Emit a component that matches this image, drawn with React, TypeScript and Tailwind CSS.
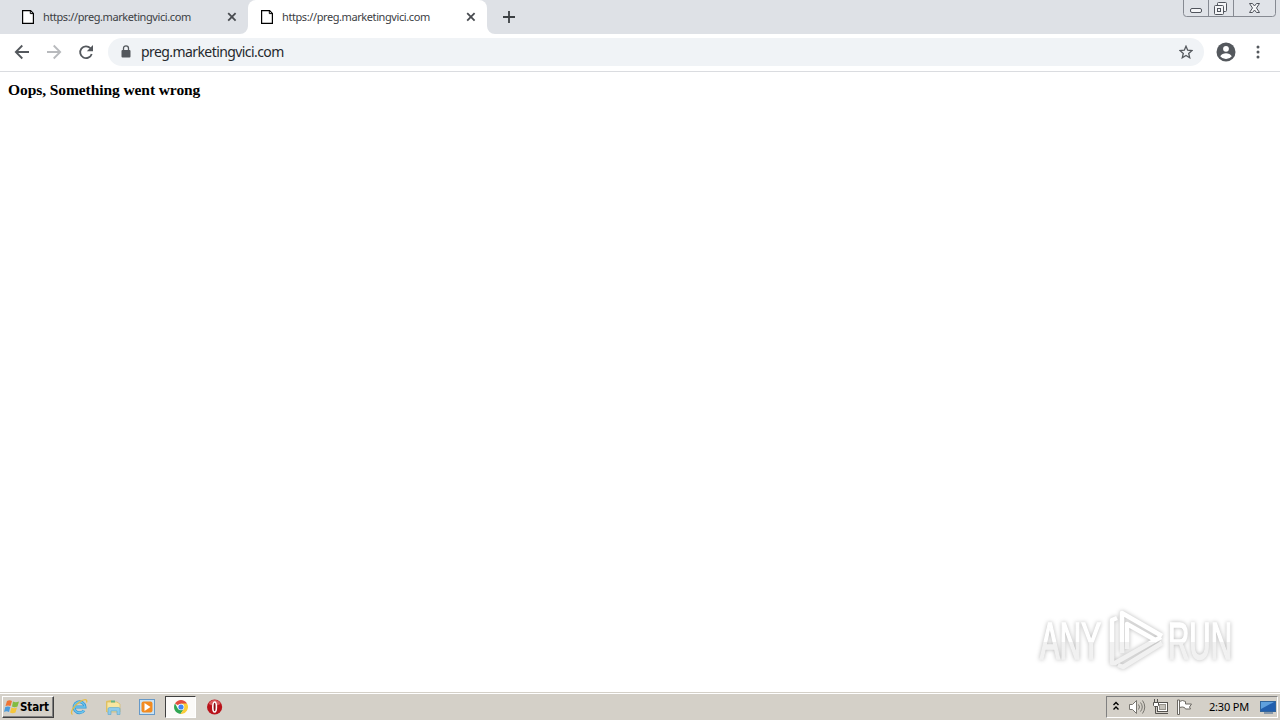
import React from 'react';

const PageIcon: React.FC = () => (
  <svg width="12" height="14" viewBox="0 0 12 14" className="shrink-0">
    <path d="M.6.6h8l2.800 2.800v10H.6z" fill="#fff" stroke="#000" strokeWidth="1.200" />
    <path d="M8.300.6v3h3" fill="none" stroke="#000" strokeWidth="1" />
  </svg>
);

const CloseIcon: React.FC = () => (
  <svg width="10" height="10" viewBox="0 0 10 10" className="shrink-0">
    <path d="M1.200 1.200l7.400 7.400M8.600 1.200L1.200 8.600" stroke="#484b50" strokeWidth="1.800" />
  </svg>
);

const TabTitle: React.FC = () => (
  <span className="ml-[9px] w-[180px] whitespace-nowrap text-[11px] leading-[14px] tracking-[-0.41px] text-[#3c4043]">
    https://preg.marketingvici.com
  </span>
);

const TabStrip: React.FC = () => (
  <div className="flex h-[34px] bg-[#dee1e6]">
    <div className="flex w-[248px] items-center pl-[22px]">
      <PageIcon />
      <TabTitle />
      <span className="ml-1"><CloseIcon /></span>
    </div>
    <div className="relative flex w-[239px] items-center rounded-t-lg bg-white pl-[13px]">
      <svg width="8" height="8" viewBox="0 0 8 8" className="absolute bottom-0 -left-2">
        <path d="M8 0v8H0a8 8 0 0 0 8-8z" fill="#fff" />
      </svg>
      <svg width="8" height="8" viewBox="0 0 8 8" className="absolute -right-2 bottom-0">
        <path d="M0 0v8h8a8 8 0 0 1-8-8z" fill="#fff" />
      </svg>
      <PageIcon />
      <TabTitle />
      <span className="ml-1"><CloseIcon /></span>
    </div>
    <div className="flex w-11 items-center justify-center">
      <svg width="12" height="12" viewBox="0 0 12 12">
        <path d="M6 0v12M0 6h12" stroke="#3c4043" strokeWidth="1.800" />
      </svg>
    </div>
    {/* Window controls */}
    <svg width="93" height="18" viewBox="0 0 93 18" className="mr-[4px] ml-auto">
      <path d="M.5 0v13.500q0 3 3 3h86q3 0 3-3V0M25.500 0v16.500M50.500 0v16.500" fill="#e0e3e8" stroke="#868a92" />
      <g fill="#f4f5f7" stroke="#50545c">
        <rect x="7.500" y="8.500" width="11" height="4" rx="1.500" />
        <rect x="34.500" y="2.500" width="9" height="9" rx="1" />
        <rect x="31.500" y="5.500" width="9" height="9" rx="1" />
        <rect x="34.500" y="8.500" width="3" height="3" />
        <path d="M66.500 3.500h3l2 2.500 2-2.500h3l-3 4.500 3 4.500h-3l-2-2.500-2 2.500h-3l3-4.500z" />
      </g>
    </svg>
  </div>
);

const Toolbar: React.FC = () => (
  <div className="flex h-[38px] items-center border-b border-[#dadce0] bg-white pb-px pl-[14px]">
    <svg width="80" height="16" viewBox="0 0 80 16" fill="none" strokeWidth="1.800" className="shrink-0">
      <path d="M15 8H2M8.300 1.500L1.800 8l6.500 6.500" stroke="#54585d" />
      <path d="M33 8h13M39.700 1.500L46.200 8l-6.500 6.500" stroke="#b8babd" />
      <path d="M76.400 4.200A5.900 5.900 0 1 0 77.700 10" stroke="#54585d" />
      <path d="M79 1v6.200h-6.200z" fill="#54585d" />
    </svg>
    <div className="ml-[14px] flex h-7 w-[1096px] items-center rounded-full bg-[#f0f3f6] pr-[11px] pl-[13px]">
      <svg width="10" height="14" viewBox="0 0 10 14">
        <rect x=".5" y="5" width="9" height="7.500" rx="1" fill="#54585d" />
        <path d="M2.500 5.500V3.300a2.500 2.500 0 0 1 5 0v2.200" fill="none" stroke="#54585d" strokeWidth="1.300" />
      </svg>
      <span className="ml-[10px] text-[14px] leading-5 tracking-[-0.58px] text-[#26292d]">preg.marketingvici.com</span>
      <svg width="14" height="14" viewBox="0 0 14 14" className="ml-auto">
        <path
          d="M7 1.200l1.700 4 4.300.4-3.300 2.800 1 4.300L7 10.400l-3.700 2.300 1-4.300L1 5.600l4.300-.4z"
          fill="none"
          stroke="#54585d"
          strokeWidth="1.300"
        />
      </svg>
    </div>
    <svg width="20" height="20" viewBox="0 0 20 20" className="ml-3">
      <circle cx="10" cy="10" r="9.500" fill="#54585d" />
      <circle cx="10" cy="6.800" r="2.900" fill="#fff" />
      <path d="M4.200 14.200c1-2.100 3.600-3 5.800-3s4.800.9 5.800 3A7 7 0 0 1 10 17a7 7 0 0 1-5.800-2.800z" fill="#fff" />
    </svg>
    <svg width="4" height="14" viewBox="0 0 4 14" className="ml-5" fill="#54585d">
      <circle cx="2" cy="2" r="1.500" />
      <circle cx="2" cy="7" r="1.500" />
      <circle cx="2" cy="12" r="1.500" />
    </svg>
  </div>
);

const Watermark: React.FC = () => (
  <svg
    width="220"
    height="80"
    viewBox="1025 600 220 80"
    className="absolute right-[35px] bottom-3 drop-shadow-[0_0_2px_rgba(0,0,0,0.28)]"
  >
    <defs>
      <linearGradient id="fade" gradientUnits="userSpaceOnUse" x1="0" y1="610" x2="0" y2="672">
        <stop offset="0.510" stopColor="#fff" />
        <stop offset="0.510" stopColor="#f1f1f1" />
      </linearGradient>
      {/* Same split, in the lettering's own coordinates */}
      <linearGradient id="fadeText" gradientUnits="userSpaceOnUse" x1="0" y1="-49" x2="0" y2="13">
        <stop offset="0.510" stopColor="#fff" />
        <stop offset="0.510" stopColor="#f1f1f1" />
      </linearGradient>
    </defs>
    <g
      fill="url(#fadeText)"
      stroke="url(#fadeText)"
      strokeWidth="1.700"
      fontFamily="'Liberation Sans', sans-serif"
      fontSize="52"
    >
      <text transform="translate(1040 659) scale(0.570 1)">ANY</text>
      <text transform="translate(1168 659) scale(0.568 1)">RUN</text>
    </g>
    <g fill="none" stroke="url(#fade)" strokeWidth="4.500" strokeLinejoin="round">
      <path d="M1117 618l-5 2v43h3l46-26" />
      <path d="M1122 653V613l40 23" />
      <path d="M1127 649v-25l30 17" />
      <path d="M1162 643l-39 24-5-2" />
    </g>
  </svg>
);

const QuickLaunch: React.FC = () => (
  <div className="flex items-center">
    {/* Internet Explorer */}
    <svg width="18" height="18" viewBox="0 0 18 18" className="ml-4">
      <path d="M14 12.500a5.500 5.500 0 1 1 1-3.500H5" fill="none" stroke="#3a9ad6" strokeWidth="3" />
      <path d="M14 12.500a5.500 5.500 0 1 1 1-3.500H5" fill="none" stroke="#6cc5ee" strokeWidth="1.400" />
      <path d="M2.500 16.500c-3-1.500 1-8.500 7-12.500 4-2.800 8.500-3.500 7 .5" fill="none" stroke="#e5bd45" strokeWidth="1.300" />
    </svg>
    {/* Explorer */}
    <svg width="18" height="18" viewBox="0 0 18 18" className="ml-4">
      <path d="M2 3l5-1 1 2h6v10H2z" fill="#e4c566" />
      <path d="M3 4h10l3 2v8H3z" fill="#f8e6a0" stroke="#d5b657" strokeWidth=".6" />
      <path d="M7 2.500h4v2H7z" fill="#64b583" />
      <path d="M4 16.500V11q0-1.500 1.500-1.500h9q1.500 0 1.500 1.500v5.500h-3V13H7v3.500z" fill="#8ecbea" stroke="#5ba6cc" strokeWidth=".6" />
    </svg>
    {/* Media Player */}
    <svg width="18" height="18" viewBox="0 0 18 18" className="ml-4">
      <rect x="1.500" y="1.500" width="15" height="15" fill="#cae3f4" stroke="#6699c8" />
      <rect x="3.500" y="3.500" width="11" height="11" rx="2" fill="#f28b20" />
      <path d="M6.500 5l6 4-6 4z" fill="#fff" />
    </svg>
    <div className="ml-[9px] flex h-[22px] w-[31px] items-center justify-center border border-t-[#404040] border-r-white border-b-white border-l-[#404040] bg-[#fbfaf8]">
      <svg width="14" height="14" viewBox="0 0 14 14">
        <path d="M7 7L1 3.500A7 7 0 0 1 13 3.500z" fill="#e34d3e" />
        <path d="M1 3.500A7 7 0 0 0 6.500 14L10 8.700 4 8.700z" fill="#31a653" />
        <path d="M7 3.500h6A7 7 0 0 1 6.500 14L10 8.700z" fill="#fbcd38" />
        <circle cx="7" cy="7" r="3.300" fill="#fff" />
        <circle cx="7" cy="7" r="2.600" fill="#4285f4" />
      </svg>
    </div>
    {/* Opera */}
    <svg width="16" height="16" viewBox="0 0 16 16" className="ml-[11px]">
      <circle cx="7.600" cy="8" r="7.600" fill="#b9131b" />
      <path d="M1.600 5a6.500 6.500 0 0 1 12 0q-6 3-12 0z" fill="#d95a5d" />
      <ellipse cx="7.600" cy="8" rx="1.800" ry="5" fill="#8c1016" stroke="#fff" strokeWidth="1.600" />
    </svg>
  </div>
);

const Tray: React.FC = () => (
  <div className="mr-[2px] ml-auto flex h-[22px] w-[172px] items-center border border-t-[#808080] border-r-white border-b-white border-l-[#808080] pl-[5px]">
    <svg width="8" height="10" viewBox="0 0 8 10" fill="none" stroke="#000" strokeWidth="1.400" className="mb-0.5">
      <path d="M1.500 4L4 1.500 6.500 4M1.500 8.500L4 6l2.500 2.500" />
    </svg>
    <svg width="18" height="16" viewBox="0 0 18 16" className="ml-[8px]" fill="none" stroke="#77756f">
      <path d="M1.500 5.500h3l4-4v13l-4-4h-3z" fill="#fff" />
      <path d="M10.500 5.500q2 2.500 0 5M12.500 3.500q3.500 4.500 0 9M14.500 1.500q4.500 6.500 0 13" />
    </svg>
    <svg width="17" height="16" viewBox="0 0 17 16" className="ml-[6px]" fill="#fff" stroke="#55534f">
      <rect x="5.500" y="3.500" width="10" height="9" />
      <rect x="7.500" y="5.500" width="6" height="5" fill="#c4c1ba" stroke="#96938c" />
      <path d="M7 14.500h9M3.500 7v7.500H8" fill="none" />
      <path d="M1.500 3.500h5v3l-1 1h-3l-1-1zM2.500 0v3M5.500 0v3" />
    </svg>
    <svg width="17" height="16" viewBox="0 0 17 16" className="ml-[7px]" fill="#fff" stroke="#6c6963">
      <path d="M3.500 2.500q3-2 6 0V5h6l-2 3 1 2h-5l-1-1.500q-2-1-5 0z" />
      <path d="M1.500 1v14.500h2V1z" />
    </svg>
    <span className="ml-4 w-[45px] whitespace-nowrap text-[11px] leading-[14px] tracking-[-0.2px] text-black">2:30 PM</span>
    <svg width="16" height="13" viewBox="0 0 16 13" className="ml-[6px]">
      <rect x=".5" y=".5" width="15" height="10" fill="#225fae" stroke="#31659c" />
      <path d="M1 1h13L1 8z" fill="#5fa0de" />
      <path d="M4 12h9" stroke="#385f8a" />
    </svg>
  </div>
);

const Taskbar: React.FC = () => (
  <div className="flex h-[28px] flex-col border-t border-[#d4d0c8] bg-[#d4d0c8]">
    <div className="h-px bg-white" />
    <div className="flex flex-1 items-center">
      <button className="ml-[2px] flex h-[22px] w-[52px] items-center border border-t-white border-r-[#404040] border-b-[#404040] border-l-white pl-px shadow-[inset_-1px_-1px_0_#808080]">
        <svg width="16" height="16" viewBox="0 0 16 16" className="shrink-0">
          <path d="M3 2q2.500-1.500 5 0L6.500 7Q4 5.800 1.500 7z" fill="#ef7434" />
          <path d="M9 2.500q2.500 1.500 6 0L13.500 7.500q-3 1.500-5.500 0z" fill="#82bc42" />
          <path d="M1.300 8q2.500-1.200 5 0L5 13Q2.500 11.500 0 13z" fill="#4b9bdc" />
          <path d="M7.500 8.500q2.500 1.500 5.500 0l-1.500 5q-3 1.500-5.500 0z" fill="#f5c63b" />
        </svg>
        <span className="pt-px font-['DejaVu_Sans_Condensed','DejaVu_Sans',sans-serif] text-[11.5px] font-bold tracking-[-0.1px] text-black">Start</span>
      </button>
      <QuickLaunch />
      <Tray />
    </div>
  </div>
);

const App: React.FC = () => {
  return (
    <div className="relative flex h-[720px] w-[1280px] flex-col overflow-hidden bg-white font-['Noto_Sans','Open_Sans',sans-serif]">
      <TabStrip />
      <Toolbar />
      <main className="relative flex-1 px-2 pt-2">
        <h1 className="font-['Liberation_Serif','Times_New_Roman',serif] text-[15.5px] leading-5 font-bold tracking-[-0.08px] text-black">
          Oops, Something went wrong
        </h1>
        <Watermark />
      </main>
      <Taskbar />
    </div>
  );
};

export default App;
